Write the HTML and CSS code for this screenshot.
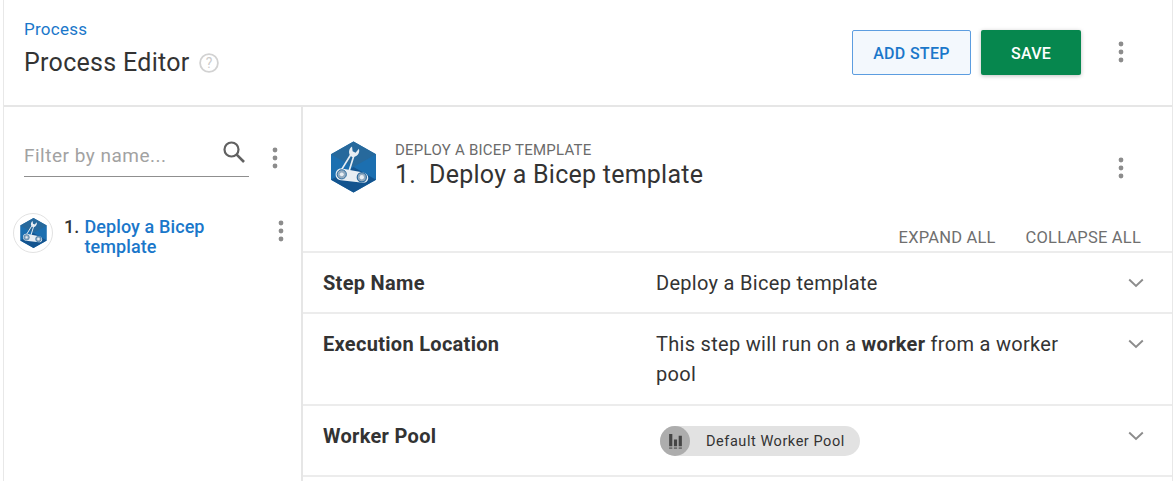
FILE: index.html
```html
<!DOCTYPE html>
<html lang="en">
<head>
<meta charset="utf-8">
<title>Process Editor</title>
<link rel="stylesheet" href="styles.css">
</head>
<body>
<svg class="defs" width="0" height="0" aria-hidden="true">
  <defs>
    <symbol id="step-logo" viewBox="0 0 46 52">
      <path d="M23 0 46 13V39L23 52 0 39V13Z" fill="#1c6fb0"/>
      <path d="M23 0 46 13 23 26 0 13Z" fill="#27699c"/>
      <path d="M0 39 23 26 46 39 23 52Z" fill="#13548f"/>
      <path d="M10 30 20.5 13M18.5 30 23.5 14" stroke="#e8eef3" stroke-width="1.7" fill="none"/>
      <path d="M19.5 14c-2-3-1-7 2-9l.6 5 3 1.4 3.4-4c1.6 4.5-2.5 9-7 8.300z" fill="#e8eef3"/>
      <path d="M11 27.5 33 31.5c7 1.3 6.800 10.800-.5 10.700L10 39.500c-7.500-.8-6.700-12.800 1-12z" fill="#e8eef3"/>
      <circle cx="11" cy="33.500" r="4.700" fill="#93abc0" stroke="#2a6a9e" stroke-width="1"/>
      <circle cx="31.500" cy="36.500" r="4.700" fill="#93abc0" stroke="#2a6a9e" stroke-width="1.2"/>
      <circle cx="11" cy="33.500" r="2" fill="#e8eef3"/>
      <circle cx="31.500" cy="36.500" r="2.200" fill="#e8eef3"/>
    </symbol>
    <symbol id="dots" viewBox="0 0 6 22">
      <circle cx="3" cy="3" r="2.4"/>
      <circle cx="3" cy="11" r="2.4"/>
      <circle cx="3" cy="19" r="2.4"/>
    </symbol>
    <symbol id="chev" viewBox="0 0 16 10">
      <path d="M1.2 1.5 8 8l6.800-6.500" fill="none" stroke="currentColor" stroke-width="1.9"/>
    </symbol>
  </defs>
</svg>
<div class="frame">
  <header class="top">
    <div class="titles">
      <a class="crumb" href="#">Process</a>
      <div class="title-row">
        <h1>Process Editor</h1>
        <svg class="help" viewBox="0 0 20 20" aria-hidden="true">
          <circle cx="10" cy="10" r="8.900" fill="none" stroke="#d2d2d2" stroke-width="1.800"/>
          <text x="10" y="15" text-anchor="middle" class="help-q">?</text>
        </svg>
      </div>
    </div>
    <div class="actions">
      <button class="btn btn-outline" type="button">ADD STEP</button>
      <button class="btn btn-save" type="button">SAVE</button>
      <svg class="dots dots-top"><use href="#dots"/></svg>
    </div>
  </header>
  <div class="body">
    <aside class="side">
      <div class="filter">
        <div class="filter-field">
          <span class="placeholder">Filter by name...</span>
          <svg class="search" viewBox="0 0 24 24" aria-hidden="true">
            <circle cx="9.500" cy="9.500" r="7" fill="none" stroke="#616161" stroke-width="2.200"/>
            <path d="M14.700 14.700 22 22" stroke="#616161" stroke-width="2.600" fill="none"/>
          </svg>
        </div>
        <svg class="dots"><use href="#dots"/></svg>
      </div>
      <div class="step-item">
        <div class="step-badge"><svg class="badge-logo"><use href="#step-logo"/></svg></div>
        <div class="step-label"><span class="num">1.</span><a class="step-link" href="#">Deploy a Bicep template</a></div>
        <svg class="dots"><use href="#dots"/></svg>
      </div>
    </aside>
    <main class="main">
      <div class="step-head">
        <svg class="head-logo"><use href="#step-logo"/></svg>
        <div class="head-text">
          <div class="head-over">DEPLOY A BICEP TEMPLATE</div>
          <div class="head-title">1. &nbsp;Deploy a Bicep template</div>
        </div>
        <svg class="dots"><use href="#dots"/></svg>
      </div>
      <div class="expand-bar">
        <span>EXPAND ALL</span>
        <span>COLLAPSE ALL</span>
      </div>
      <section class="row row-name">
        <div class="row-label">Step Name</div>
        <div class="row-value">Deploy a Bicep template</div>
        <svg class="chev"><use href="#chev"/></svg>
      </section>
      <section class="row row-loc">
        <div class="row-label">Execution Location</div>
        <div class="row-value">This step will run on a <b>worker</b> from a worker pool</div>
        <svg class="chev"><use href="#chev"/></svg>
      </section>
      <section class="row row-pool">
        <div class="row-label">Worker Pool</div>
        <div class="row-value">
          <span class="chip">
            <span class="chip-icon">
              <svg viewBox="0 0 16 16" aria-hidden="true">
                <path d="M2 1h3v11.500H2zM6.500 6h3v6.500h-3zM11 2.500h3v10h-3z" fill="#454545"/>
                <path d="M2 13.500h3V15H2zM6.500 13.500h3V15h-3zM11 13.500h3V15h-3z" fill="#6e6e6e"/>
              </svg>
            </span>
            <span class="chip-text">Default Worker Pool</span>
          </span>
        </div>
        <svg class="chev"><use href="#chev"/></svg>
      </section>
    </main>
  </div>
</div>
</body>
</html>
```
FILE: styles.css
```css
* { box-sizing: border-box; }
html, body { margin: 0; padding: 0; height: 100%; overflow: hidden; background: #fff; }
body { font-family: Roboto, "Liberation Sans", sans-serif; color: #333; }
.defs { display: block; height: 0; }
a { text-decoration: none; }

.frame {
  margin-left: 3px;
  width: 1170px;
  height: 481px;
  border-left: 1px solid #e8e8e8;
  border-right: 1px solid #e8e8e8;
  display: flex;
  flex-direction: column;
}
.top {
  height: 107px;
  flex: none;
  border-bottom: 2px solid #e6e6e6;
  display: flex;
  justify-content: space-between;
  padding: 20px 0 0 20px;
}
.crumb { display: block; font-size: 17px; line-height: 19px; color: #1a77ca; letter-spacing: 0.25px; }
.title-row { display: flex; align-items: center; gap: 10px; margin-top: 9px; }
h1 { margin: 0; font-size: 25px; line-height: 30px; font-weight: 400; color: #333; letter-spacing: 0.3px; }
.help { width: 20px; height: 20px; flex: none; margin-left: -1px; }
.help-q { font-family: Roboto, sans-serif; font-size: 14px; fill: #cccccc; }

.actions { display: flex; align-items: flex-start; padding-top: 10px; }
.btn {
  font-family: Roboto, sans-serif;
  font-size: 16px;
  font-weight: 500;
  height: 45px;
  padding: 2px 0 0;
  border-radius: 2px;
  letter-spacing: 0.3px;
  cursor: pointer;
}
.btn-outline { width: 119px; background: #f3f8fd; border: 1px solid #5c9de0; color: #1a77ca; margin-right: 10px; }
.btn-save { width: 100px; background: #06874e; border: 0; color: #fff; box-shadow: 0 1px 4px rgba(0,0,0,.25); }

.dots { width: 6px; height: 22px; fill: #8c8c8c; flex: none; }
.dots-top { margin: 11px 48px 0 37px; }

.body { flex: 1; display: flex; min-height: 0; }
.side { width: 299px; flex: none; border-right: 2px solid #e6e6e6; }
.filter { display: flex; align-items: flex-start; padding: 28px 0 0 20px; }
.filter-field {
  width: 225px;
  height: 42px;
  border-bottom: 1px solid #8f8f8f;
  display: flex;
  justify-content: space-between;
  padding-top: 8px;
}
.placeholder { font-size: 19px; line-height: 26px; color: #a2a2a2; letter-spacing: 0.5px; }
.search { width: 24px; height: 24px; margin-right: 3px; margin-top: -3px; }
.filter .dots { margin: 12px 0 0 23px; }

.step-item { display: flex; align-items: flex-start; padding: 36px 0 0 9px; }
.step-badge {
  width: 40px;
  height: 40px;
  border: 1px solid #e2e2e2;
  border-radius: 50%;
  flex: none;
  display: flex;
  align-items: center;
  justify-content: center;
}
.badge-logo { width: 27px; height: 30px; }
.step-label {
  width: 207px;
  margin-left: 11px;
  display: flex;
  gap: 5px;
  font-size: 18px;
  line-height: 20px;
  font-weight: 500;
  letter-spacing: 0.1px;
  padding-top: 4px;
}
.num { color: #333; }
.step-link { color: #1a77ca; width: 135px; }
.step-item .dots { margin: 7px 0 0 7px; }

.main { flex: 1; min-width: 0; }
.step-head { height: 93px; display: flex; align-items: flex-start; padding: 34px 48px 0 28px; }
.head-logo { width: 45px; height: 52px; flex: none; }
.head-text { flex: 1; margin-left: 19px; }
.head-over { font-size: 15px; line-height: 17px; color: #6b6b6b; letter-spacing: 0.25px; margin-top: 1px; }
.head-title { font-size: 25px; line-height: 30px; margin-top: 1px; color: #333; letter-spacing: 0.25px; }
.step-head .dots { margin-top: 16px; }

.expand-bar {
  height: 53px;
  display: flex;
  justify-content: flex-end;
  gap: 30px;
  padding: 28px 31px 0 0;
  font-size: 16.500px;
  line-height: 20px;
  color: #6f6f6f;
  letter-spacing: 0.2px;
  border-bottom: 2px solid #ececec;
}

.row {
  display: flex;
  align-items: flex-start;
  padding: 19px 28px 0 20px;
  border-bottom: 2px solid #ececec;
  font-size: 20px;
  line-height: 30px;
  letter-spacing: 0.3px;
}
.row-name { height: 61px; }
.row-loc { height: 92px; padding-top: 19px; }
.row-pool { height: 71px; padding-top: 19px; }
.row-label { width: 333px; flex: none; font-weight: 700; color: #333; line-height: 22px; }
.row-value { width: 430px; flex: none; color: #333; line-height: 30px; margin-top: -4px; }
.row-value b { font-weight: 700; }
.row-pool .row-value { margin-top: 1px; line-height: normal; margin-left: 4px; width: 426px; }
.chev { width: 16px; height: 10px; color: #8c8c8c; flex: none; margin-left: 42px; margin-top: 6px; }

.chip {
  display: inline-flex;
  align-items: center;
  height: 30px;
  width: 200px;
  border-radius: 15px;
  background: #e2e2e2;
}
.chip-icon {
  width: 30px;
  height: 30px;
  border-radius: 50%;
  background: #adadad;
  display: flex;
  align-items: center;
  justify-content: center;
  flex: none;
}
.chip-icon svg { width: 17px; height: 17px; }
.chip-text { font-size: 14.500px; margin-left: 16px; letter-spacing: 0.55px; color: #333; }
```
